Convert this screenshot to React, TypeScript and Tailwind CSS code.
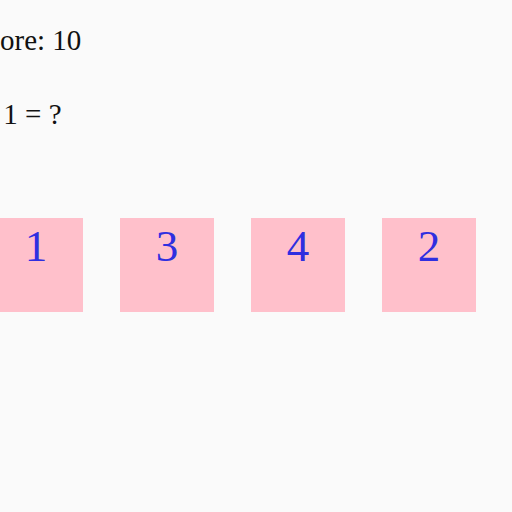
export default function App() {
  const nums = [1, 3, 4, 2];
  return (
    <div className="min-h-screen bg-[#fafafa] font-['Liberation_Serif',serif] text-[#111] overflow-hidden">
      <div className="pt-[23px] ml-[-29px] text-[29px] leading-[34px] whitespace-nowrap">Score: 10</div>
      <div className="mt-[40px] ml-[-42px] text-[29px] leading-[34px] whitespace-nowrap">1 + 1 = ?</div>
      <div className="mt-[87px] ml-[-11px] flex gap-[37px]">
        {nums.map((n) => (
          <div
            key={n}
            className="w-[94px] h-[94px] shrink-0 bg-[#ffc0cb] text-center text-[45px] leading-[50px] pt-[3px] text-[#2f2fe0]"
          >
            {n}
          </div>
        ))}
      </div>
    </div>
  );
}
